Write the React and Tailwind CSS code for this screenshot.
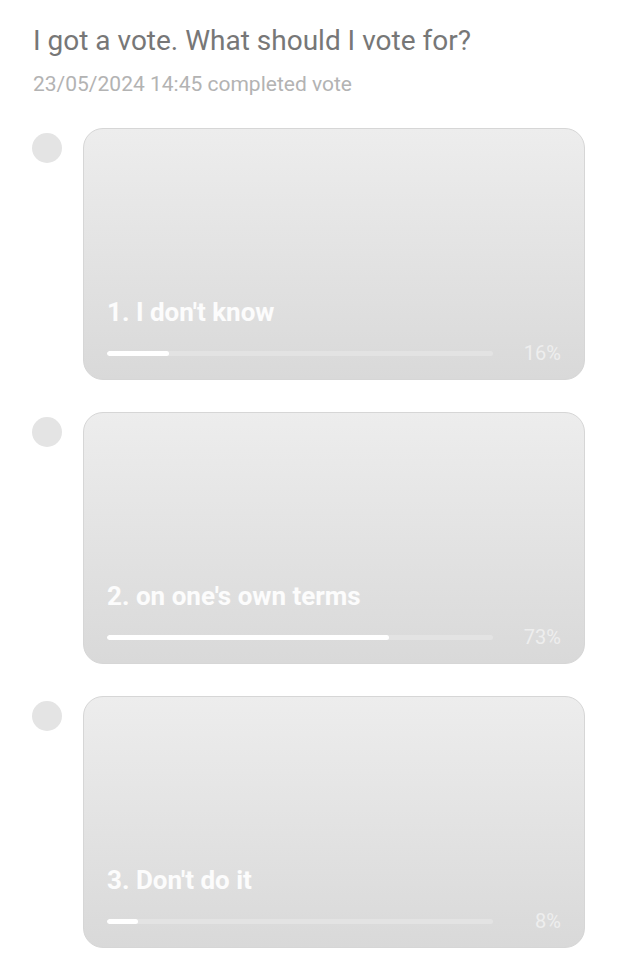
import React from 'react';

const options = [
  { label: "1. I don't know", pct: 16 },
  { label: "2. on one's own terms", pct: 73 },
  { label: "3. Don't do it", pct: 8 },
];

function OptionCard({ label, pct }) {
  return (
    <div className="flex items-start">
      <div className="w-[83px] shrink-0 pl-[32px] pt-[5px]">
        <div className="w-[30px] h-[30px] rounded-full bg-[#e4e4e4]" />
      </div>
      <div className="w-[502px] h-[252px] rounded-[20px] border border-[#d6d6d6] bg-gradient-to-b from-[#ededed] to-[#d9d9d9] flex flex-col justify-end px-[23px] pb-[14px]">
        <div className="text-[26px] font-bold text-white/90 leading-[30px]">{label}</div>
        <div className="flex items-center mt-[14px]">
          <div className="w-[386px] h-[5px] rounded-full bg-[#e3e3e3] overflow-hidden">
            <div className="h-full rounded-full bg-white" style={{ width: `${pct}%` }} />
          </div>
          <div className="flex-1 text-right text-[20px] text-[#eeeeee] leading-[24px]">{pct}%</div>
        </div>
      </div>
    </div>
  );
}

export default function App() {
  return (
    <div className="w-[618px] h-[960px] bg-white font-['Roboto',sans-serif] overflow-hidden">
      <div className="pl-[33px] pt-[24px]">
        <h1 className="text-[28px] text-[#777777] leading-[34px]">I got a vote. What should I vote for?</h1>
        <p className="text-[21px] text-[#b3b3b3] leading-[26px] mt-[13px]">23/05/2024 14:45 completed vote</p>
      </div>
      <div className="flex flex-col gap-[32px] mt-[31px]">
        {options.map((o) => (
          <OptionCard key={o.label} {...o} />
        ))}
      </div>
    </div>
  );
}
